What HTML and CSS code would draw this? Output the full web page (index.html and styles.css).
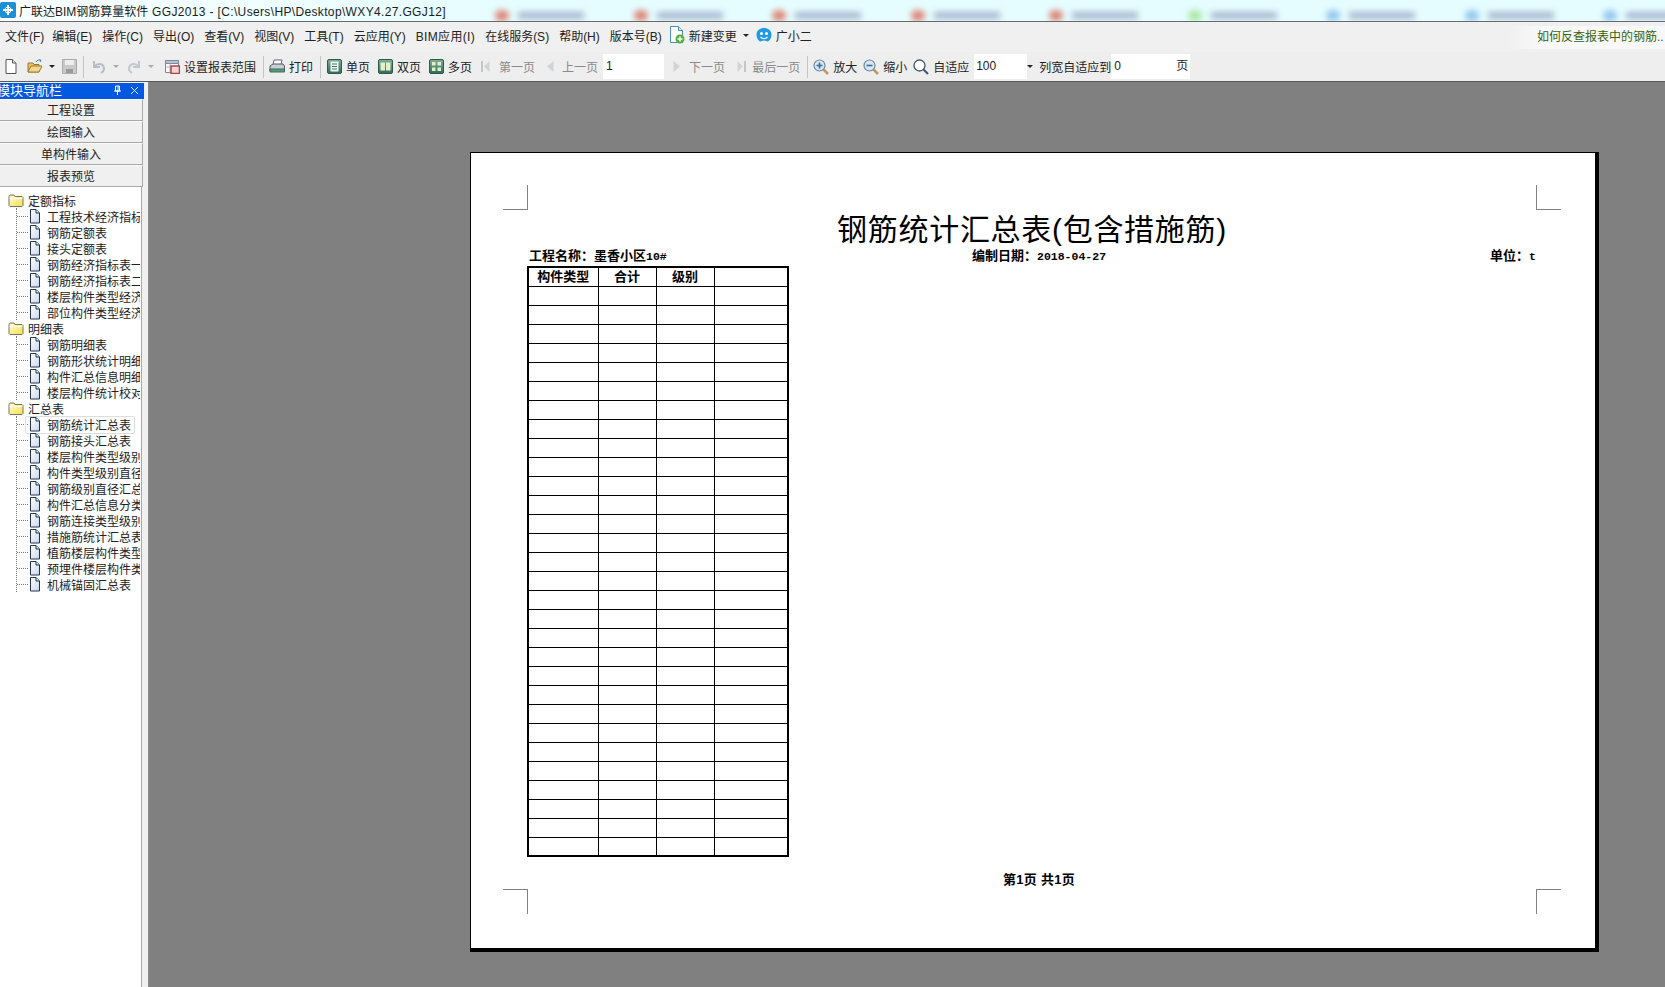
FILE: index.html
```html
<!DOCTYPE html>
<html lang="zh-CN">
<head>
  <meta charset="UTF-8">
  <title>广联达BIM钢筋算量软件 GGJ2013</title>
  <link rel="stylesheet" href="styles.css">
</head>
<body>
<svg class="defs" width="0" height="0">
  <defs>
    <linearGradient id="folderFill" x1="0" y1="0" x2="1" y2="1"><stop offset="0" stop-color="#fffde0"/><stop offset="1" stop-color="#f2e04a"/></linearGradient>
    <linearGradient id="docFill" x1="0" y1="0" x2="1" y2="1"><stop offset="0" stop-color="#fff"/><stop offset="1" stop-color="#c9d8ea"/></linearGradient>
    <linearGradient id="pageFill" x1="0" y1="0" x2="0" y2="1"><stop offset="0" stop-color="#7fb09a"/><stop offset="1" stop-color="#2f6d58"/></linearGradient>
    <symbol id="i-folder" viewBox="0 0 16 14"><path d="M1 12.500V3.500L2 2h4l1 1.500h7l1 1V12.500L14 13.500H2z" fill="url(#folderFill)" stroke="#77725a"/><path d="M1.500 5.500h13" stroke="#fff"/></symbol>
    <symbol id="i-doc" viewBox="0 0 13 15"><path d="M2.500 .5h5.500l3.500 3.500v10h-9z" fill="url(#docFill)" stroke="#1f3550"/><path d="M8 .5v3.500h3.500" fill="#dfe8f3" stroke="#1f3550"/></symbol>
    <symbol id="i-new" viewBox="0 0 12 15"><path d="M1 .5h6.500l3.500 3.500v10.500h-10z" fill="#fff" stroke="#555"/><path d="M7.500 .5v3.500h3.500" fill="#e8e8e8" stroke="#555"/></symbol>
    <symbol id="i-open" viewBox="0 0 16 15"><path d="M1 13V4h5l1 1.500h5V13z" fill="#e9c064" stroke="#9a7a35"/><path d="M1 13l3-6h11l-3 6z" fill="#f4d88a" stroke="#9a7a35"/><path d="M9 3c1-2 3-2.500 5-1.500M14 1.500l-1.500-1M14 1.500l-1 1.500" fill="none" stroke="#4d7fb5"/></symbol>
    <symbol id="i-save" viewBox="0 0 15 15"><path d="M.5 .5h14v14H.5z" fill="#c9c9c9" stroke="#aaa"/><path d="M3 1h9v5H3z" fill="#eee"/><path d="M4 10h7v4H4z" fill="#999"/></symbol>
    <symbol id="i-undo" viewBox="0 0 13 14"><path d="M2 1v6h6M2.500 6.500C5 3 10 3 11.500 6.500c1 2.500 0 5-2.500 6.500" fill="none" stroke="#b5bcc5" stroke-width="2"/></symbol>
    <symbol id="i-redo" viewBox="0 0 13 14"><path d="M11 1v6H5M10.500 6.500C8 3 3 3 1.500 6.500c-1 2.500 0 5 2.500 6.500" fill="none" stroke="#c2c8ce" stroke-width="2"/></symbol>
    <symbol id="i-range" viewBox="0 0 15 15"><path d="M.5 1.500h13v12H.5z" fill="#fff" stroke="#7b8794"/><path d="M.5 1.500h13v3H.5z" fill="#b7c3d0" stroke="#7b8794"/><path d="M5 4.500v9M.5 8h13" stroke="#a9b4bf"/><path d="M6 7h8.500v7.500H6z" fill="#f0d5d5" stroke="#b5404a" stroke-width="1.500"/></symbol>
    <symbol id="i-print" viewBox="0 0 16 15"><path d="M5 1h8l-1 5H4z" fill="#fff" stroke="#667"/><path d="M1 7l3-2h10l1.500 2v5H1z" fill="#c7ced6" stroke="#556"/><path d="M1 10h14.500v3H1z" fill="#5c9a7a" stroke="#3e6a55"/></symbol>
    <symbol id="i-single" viewBox="0 0 15 15"><rect x=".5" y=".5" width="14" height="14" rx="1.500" fill="url(#pageFill)" stroke="#2d5a4a"/><path d="M3.500 2.500h8v10h-8z" fill="#eef4f2"/><path d="M5 5h5M5 7.500h5M5 10h5" stroke="#4a7a68"/></symbol>
    <symbol id="i-double" viewBox="0 0 15 15"><rect x=".5" y=".5" width="14" height="14" rx="1.500" fill="url(#pageFill)" stroke="#2d5a4a"/><path d="M2.500 3.500h4.500v8H2.500zM8 3.500h4.500v8H8z" fill="#e6f0c8"/></symbol>
    <symbol id="i-multi" viewBox="0 0 15 15"><rect x=".5" y=".5" width="14" height="14" rx="1.500" fill="url(#pageFill)" stroke="#2d5a4a"/><path d="M3 3h3.500v3.500H3zM8.500 3H12v3.500H8.500zM3 8.500h3.500V12H3zM8.500 8.500H12V12H8.500z" fill="#e6f0c8"/></symbol>
    <symbol id="i-first" viewBox="0 0 9 13"><path d="M1 1v11" stroke="#c3c7cc" stroke-width="2"/><path d="M8.500 1v11L3 6.500z" fill="#d0d4d8"/></symbol>
    <symbol id="i-prev" viewBox="0 0 8 13"><path d="M7.500 1v11L1 6.500z" fill="#d0d4d8"/></symbol>
    <symbol id="i-next" viewBox="0 0 8 13"><path d="M.5 1v11L7 6.500z" fill="#d0d4d8"/></symbol>
    <symbol id="i-last" viewBox="0 0 9 13"><path d="M8 1v11" stroke="#c3c7cc" stroke-width="2"/><path d="M.5 1v11L6 6.500z" fill="#d0d4d8"/></symbol>
    <symbol id="i-zoomin" viewBox="0 0 16 16"><circle cx="6.500" cy="6.500" r="5.500" fill="#d9e6f2" stroke="#6b87a3" stroke-width="1.200"/><path d="M3.500 6.500h6M6.500 3.500v6" stroke="#33709e" stroke-width="1.600"/><path d="M10.500 10.500l4.500 4.500" stroke="#c09a5a" stroke-width="2.500"/></symbol>
    <symbol id="i-zoomout" viewBox="0 0 16 16"><circle cx="6.500" cy="6.500" r="5.500" fill="#d9e6f2" stroke="#6b87a3" stroke-width="1.200"/><path d="M3.500 6.500h6" stroke="#33709e" stroke-width="1.600"/><path d="M10.500 10.500l4.500 4.500" stroke="#c09a5a" stroke-width="2.500"/></symbol>
    <symbol id="i-fit" viewBox="0 0 16 16"><circle cx="6.500" cy="6.500" r="5.500" fill="#fff" stroke="#3f566b" stroke-width="1.300"/><path d="M10.500 10.500l4.500 4.500" stroke="#3f566b" stroke-width="2"/></symbol>
  </defs>
</svg>

<div class="titlebar">
  <svg class="app-icon" width="16" height="16" viewBox="0 0 16 16"><rect width="16" height="16" rx="2" fill="#1c8fd6"/><path d="M8 3v10M3 8h10" stroke="#fff" stroke-width="2"/><circle cx="8" cy="8" r="3" fill="none" stroke="#fff"/></svg>
  <span class="app-title">广联达BIM钢筋算量软件<span class="app-path"> GGJ2013 - [C:\Users\HP\Desktop\WXY4.27.GGJ12]</span></span>
  <div class="ad-strip">
    <div class="ad"><i class="ad-dot red"></i><i class="ad-bar"></i></div>
    <div class="ad"><i class="ad-dot red"></i><i class="ad-bar"></i></div>
    <div class="ad"><i class="ad-dot red"></i><i class="ad-bar"></i></div>
    <div class="ad"><i class="ad-dot red"></i><i class="ad-bar"></i></div>
    <div class="ad"><i class="ad-dot red"></i><i class="ad-bar"></i></div>
    <div class="ad"><i class="ad-dot green"></i><i class="ad-bar"></i></div>
    <div class="ad"><i class="ad-dot blue"></i><i class="ad-bar"></i></div>
    <div class="ad"><i class="ad-dot blue"></i><i class="ad-bar"></i></div>
    <div class="ad"><i class="ad-dot blue"></i><i class="ad-bar"></i></div>
  </div>
</div>

<div class="menubar">
  <span class="menu-first">文件(F)</span>
  <span>编辑(E)</span>
  <span>操作(C)</span>
  <span>导出(O)</span>
  <span>查看(V)</span>
  <span>视图(V)</span>
  <span>工具(T)</span>
  <span>云应用(Y)</span>
  <span class="menu-bim">BIM应用(I)</span>
  <span>在线服务(S)</span>
  <span>帮助(H)</span>
  <span>版本号(B)</span>
  <span class="menu-icon menu-change">
    <svg width="16" height="18" viewBox="0 0 16 18"><path d="M1.500 .5h8l4 4v12h-12z" fill="#fff" stroke="#4a8fc0"/><path d="M9.500 .5v4h4" fill="#dcecf8" stroke="#4a8fc0"/><circle cx="11" cy="13" r="4.500" fill="#52b043"/><path d="M8.500 13h5M11 10.500v5" stroke="#fff" stroke-width="1.500"/></svg>
    新建变更
  </span>
  <i class="drop dark menu-drop"></i>
  <span class="menu-icon">
    <svg width="16" height="16" viewBox="0 0 16 16"><path d="M8 1c4 0 7.500 2.500 7.500 6.500 0 4-2.500 7-4 7-1 0-1.500-1-3.500-1s-2.500 1-3.500 1c-1.500 0-4-3-4-7C.5 3.500 4 1 8 1z" fill="#1f9be2"/><circle cx="5.500" cy="6.500" r="1.500" fill="#fff"/><circle cx="10.500" cy="6.500" r="1.500" fill="#fff"/><path d="M4.500 10c2 2 5 2 7 0" fill="none" stroke="#fff" stroke-width="1.300"/></svg>
    广小二
  </span>
  <div class="tip">如何反查报表中的钢筋..</div>
</div>

<div class="toolbar">
  <svg class="ml5" width="12" height="15"><use href="#i-new"/></svg>
  <svg class="ml10" width="16" height="15"><use href="#i-open"/></svg>
  <i class="drop dark ml6"></i>
  <svg class="ml7" width="15" height="15"><use href="#i-save"/></svg>
  <i class="sep ml6"></i>
  <svg class="ml8" width="13" height="14"><use href="#i-undo"/></svg>
  <i class="drop ml8"></i>
  <svg class="ml9" width="13" height="14"><use href="#i-redo"/></svg>
  <i class="drop ml7"></i>
  <svg class="ml11" width="15" height="15"><use href="#i-range"/></svg>
  <span class="tool-text">设置报表范围</span>
  <i class="sep"></i>
  <svg class="ml5" width="16" height="15"><use href="#i-print"/></svg>
  <span class="tool-text">打印</span>
  <i class="sep"></i>
  <svg class="ml6" width="15" height="15"><use href="#i-single"/></svg>
  <span class="tool-text">单页</span>
  <svg class="ml8" width="15" height="15"><use href="#i-double"/></svg>
  <span class="tool-text">双页</span>
  <svg class="ml8" width="15" height="15"><use href="#i-multi"/></svg>
  <span class="tool-text">多页</span>
  <svg class="ml9" width="9" height="13"><use href="#i-first"/></svg>
  <span class="tool-text off ml9">第一页</span>
  <svg class="ml11" width="8" height="13"><use href="#i-prev"/></svg>
  <span class="tool-text off ml8">上一页</span>
  <div class="field page-no">1</div>
  <svg class="ml9" width="8" height="13"><use href="#i-next"/></svg>
  <span class="tool-text off ml8">下一页</span>
  <svg class="ml12" width="9" height="13"><use href="#i-last"/></svg>
  <span class="tool-text off ml6">最后一页</span>
  <i class="sep"></i>
  <svg class="ml5" width="16" height="16"><use href="#i-zoomin"/></svg>
  <span class="tool-text">放大</span>
  <svg class="ml6" width="16" height="16"><use href="#i-zoomout"/></svg>
  <span class="tool-text">缩小</span>
  <svg class="ml6" width="16" height="16"><use href="#i-fit"/></svg>
  <span class="tool-text">自适应</span>
  <div class="field zoom-no">100</div>
  <i class="drop dark"></i>
  <span class="tool-text ml6">列宽自适应到</span>
  <div class="field col-no">0</div>
  <div class="field page-unit">页</div>
</div>

<div class="main">
  <div class="nav">
    <div class="nav-title">
      <span>模块导航栏</span>
      <svg class="nav-pin" width="9" height="10" viewBox="0 0 9 10"><path d="M2.500 1h4v5h-4zM1 6h7M4.500 6v4M5 1v5" fill="none" stroke="#fff"/></svg>
      <svg class="nav-close" width="9" height="9" viewBox="0 0 9 9"><path d="M1 1l7 7M8 1L1 8" stroke="#dfe9ff"/></svg>
    </div>
    <div class="nav-btn">工程设置</div>
    <div class="nav-btn">绘图输入</div>
    <div class="nav-btn">单构件输入</div>
    <div class="nav-btn">报表预览</div>
    <div class="tree">
      <div class="tree-root"><svg width="16" height="14"><use href="#i-folder"/></svg>定额指标</div>
      <ul class="tree-list">
        <li><svg width="13" height="15"><use href="#i-doc"/></svg>工程技术经济指标</li>
        <li><svg width="13" height="15"><use href="#i-doc"/></svg>钢筋定额表</li>
        <li><svg width="13" height="15"><use href="#i-doc"/></svg>接头定额表</li>
        <li><svg width="13" height="15"><use href="#i-doc"/></svg>钢筋经济指标表一</li>
        <li><svg width="13" height="15"><use href="#i-doc"/></svg>钢筋经济指标表二</li>
        <li><svg width="13" height="15"><use href="#i-doc"/></svg>楼层构件类型经济指标表</li>
        <li><svg width="13" height="15"><use href="#i-doc"/></svg>部位构件类型经济指标表</li>
      </ul>
      <div class="tree-root"><svg width="16" height="14"><use href="#i-folder"/></svg>明细表</div>
      <ul class="tree-list">
        <li><svg width="13" height="15"><use href="#i-doc"/></svg>钢筋明细表</li>
        <li><svg width="13" height="15"><use href="#i-doc"/></svg>钢筋形状统计明细表</li>
        <li><svg width="13" height="15"><use href="#i-doc"/></svg>构件汇总信息明细表</li>
        <li><svg width="13" height="15"><use href="#i-doc"/></svg>楼层构件统计校对表</li>
      </ul>
      <div class="tree-root"><svg width="16" height="14"><use href="#i-folder"/></svg>汇总表</div>
      <ul class="tree-list">
        <li class="selected"><svg width="13" height="15"><use href="#i-doc"/></svg>钢筋统计汇总表</li>
        <li><svg width="13" height="15"><use href="#i-doc"/></svg>钢筋接头汇总表</li>
        <li><svg width="13" height="15"><use href="#i-doc"/></svg>楼层构件类型级别直径汇总表</li>
        <li><svg width="13" height="15"><use href="#i-doc"/></svg>构件类型级别直径汇总表</li>
        <li><svg width="13" height="15"><use href="#i-doc"/></svg>钢筋级别直径汇总表</li>
        <li><svg width="13" height="15"><use href="#i-doc"/></svg>构件汇总信息分类统计表</li>
        <li><svg width="13" height="15"><use href="#i-doc"/></svg>钢筋连接类型级别直径汇总表</li>
        <li><svg width="13" height="15"><use href="#i-doc"/></svg>措施筋统计汇总表</li>
        <li><svg width="13" height="15"><use href="#i-doc"/></svg>植筋楼层构件类型级别直径汇总表</li>
        <li><svg width="13" height="15"><use href="#i-doc"/></svg>预埋件楼层构件类型统计表</li>
        <li><svg width="13" height="15"><use href="#i-doc"/></svg>机械锚固汇总表</li>
      </ul>
    </div>
  </div>

  <div class="preview">
    <div class="sheet">
      <i class="crop crop-tl"></i>
      <i class="crop crop-tr"></i>
      <i class="crop crop-bl"></i>
      <i class="crop crop-br"></i>

      <h1 class="sheet-title">钢筋统计汇总表(包含措施筋)</h1>
      <div class="sheet-info">
        <span>工程名称：墨香小区<span class="mono">10#</span></span>
        <span>编制日期：<span class="mono">2018-04-27</span></span>
        <span class="sheet-unit">单位：<span class="mono">t</span></span>
      </div>

      <table class="report">
        <colgroup><col class="c1"><col class="c2"><col class="c3"><col class="c4"></colgroup>
        <thead><tr><th>构件类型</th><th>合计</th><th>级别</th><th></th></tr></thead>
        <tbody>
          <tr><td></td><td></td><td></td><td></td></tr>
          <tr><td></td><td></td><td></td><td></td></tr>
          <tr><td></td><td></td><td></td><td></td></tr>
          <tr><td></td><td></td><td></td><td></td></tr>
          <tr><td></td><td></td><td></td><td></td></tr>
          <tr><td></td><td></td><td></td><td></td></tr>
          <tr><td></td><td></td><td></td><td></td></tr>
          <tr><td></td><td></td><td></td><td></td></tr>
          <tr><td></td><td></td><td></td><td></td></tr>
          <tr><td></td><td></td><td></td><td></td></tr>
          <tr><td></td><td></td><td></td><td></td></tr>
          <tr><td></td><td></td><td></td><td></td></tr>
          <tr><td></td><td></td><td></td><td></td></tr>
          <tr><td></td><td></td><td></td><td></td></tr>
          <tr><td></td><td></td><td></td><td></td></tr>
          <tr><td></td><td></td><td></td><td></td></tr>
          <tr><td></td><td></td><td></td><td></td></tr>
          <tr><td></td><td></td><td></td><td></td></tr>
          <tr><td></td><td></td><td></td><td></td></tr>
          <tr><td></td><td></td><td></td><td></td></tr>
          <tr><td></td><td></td><td></td><td></td></tr>
          <tr><td></td><td></td><td></td><td></td></tr>
          <tr><td></td><td></td><td></td><td></td></tr>
          <tr><td></td><td></td><td></td><td></td></tr>
          <tr><td></td><td></td><td></td><td></td></tr>
          <tr><td></td><td></td><td></td><td></td></tr>
          <tr><td></td><td></td><td></td><td></td></tr>
          <tr><td></td><td></td><td></td><td></td></tr>
          <tr><td></td><td></td><td></td><td></td></tr>
          <tr><td></td><td></td><td></td><td></td></tr>
        </tbody>
      </table>

      <div class="sheet-footer">第1页 共1页</div>
    </div>
  </div>
</div>
</body>
</html>
```

FILE: styles.css
```css
* {
  box-sizing: border-box;
}

html, body {
  height: 987px;
}

body {
  margin: 0;
  overflow: hidden;
  font-family: "Liberation Sans", "Noto Sans CJK SC", sans-serif;
  font-size: 12px;
  color: #222;
  background-color: #f0f0f0;
  display: flex;
  flex-direction: column;
}

.defs {
  position: absolute;
}

i {
  display: block;
  font-style: normal;
}

svg {
  flex: none;
  display: block;
}

/* title bar */
.titlebar {
  flex: none;
  height: 22px;
  display: flex;
  align-items: center;
  padding-bottom: 1px;
  background: linear-gradient(90deg, #f8ffff, #e6fdff 30%, #e6fdff);
  border-bottom: 1px solid #6a6a6a;
  overflow: hidden;
}

.app-icon {
  margin-right: 3px;
}

.app-title {
  width: 476px;
  flex: none;
  font-size: 12px;
  white-space: nowrap;
  color: #1c1c1c;
}

.app-path {
  letter-spacing: .35px;
}

.ad-strip {
  display: flex;
  margin-top: 10px;
  filter: blur(3px);
}

.ad {
  width: 138.5px;
  flex: none;
  display: flex;
  align-items: center;
  gap: 9px;
}

.ad-dot {
  width: 14px;
  height: 11px;
  border-radius: 50%;
}

.ad-dot.red { background-color: #dd8070; }
.ad-dot.green { background-color: #a6e8a0; }
.ad-dot.blue { background-color: #8fc4ec; }

.ad-bar {
  width: 66px;
  height: 7px;
  background-color: #a5b6cc;
}

/* menu */
.menubar {
  flex: none;
  height: 30px;
  display: flex;
  align-items: center;
  gap: 10px;
  padding: 0 0 4px 5px;
  background-color: #f0f0f0;
  white-space: nowrap;
}

.menu-first {
  margin-right: -2px;
}

.menu-bim {
  letter-spacing: .35px;
}

.menu-icon {
  display: flex;
  align-items: center;
  gap: 4px;
}

.menu-change {
  margin-left: -3px;
}

.menu-drop {
  margin: 0 -3px 0 -4px;
}

.drop {
  width: 0;
  height: 0;
  flex: none;
  border-left: 3px solid transparent;
  border-right: 3px solid transparent;
  border-top: 3px solid #aaa;
}

.drop.dark {
  border-top-color: #222;
}

.tip {
  margin: 4px 0 0 auto;
  width: 156px;
  height: 23px;
  line-height: 23px;
  padding-left: 28px;
  overflow: hidden;
  color: #35630f;
  background: linear-gradient(90deg, #f0f0f0, #f8f8f8 20%);
}

/* toolbar */
.toolbar {
  flex: none;
  height: 30px;
  display: flex;
  align-items: center;
  background-color: #eeeeee;
  border-bottom: 1px solid #5a5a5a;
  white-space: nowrap;
}

.tool-text {
  flex: none;
  margin-left: 4px;
  color: #222;
}

.tool-text.off {
  color: #8a8a8a;
}

.sep {
  width: 1px;
  height: 22px;
  flex: none;
  margin-left: 7px;
  background-color: #c4c4c4;
}

.field {
  height: 25px;
  flex: none;
  line-height: 25px;
  background-color: #fff;
}

.page-no {
  width: 61px;
  margin-left: 5px;
  padding-left: 3px;
}

.zoom-no {
  width: 53px;
  margin-left: 5px;
  padding-left: 2px;
}

.col-no {
  width: 64px;
  padding-left: 3px;
}

.page-unit {
  width: 15px;
  padding-left: 1px;
}

.ml5 { margin-left: 5px; }
.ml6 { margin-left: 6px; }
.ml7 { margin-left: 7px; }
.ml8 { margin-left: 8px; }
.ml9 { margin-left: 9px; }
.ml10 { margin-left: 10px; }
.ml11 { margin-left: 11px; }
.ml12 { margin-left: 12px; }

/* main area */
.main {
  flex: 1;
  min-height: 0;
  display: flex;
}

.nav {
  width: 149px;
  flex: none;
  display: flex;
  flex-direction: column;
  padding-top: 1px;
  background-color: #f0f0f0;
  border-right: 1px solid #8c8c8c;
}

.nav-title {
  width: 144px;
  height: 16px;
  flex: none;
  display: flex;
  align-items: center;
  padding-bottom: 2px;
  background-color: #0358e0;
  color: #fff;
  font-size: 13px;
  line-height: 15px;
  overflow: hidden;
}

.nav-title span {
  margin-left: -3px;
  white-space: nowrap;
}

.nav-pin {
  margin-left: auto;
}

.nav-close {
  margin: 0 5px 0 8px;
}

.nav-btn {
  width: 143px;
  height: 22px;
  flex: none;
  line-height: 22px;
  text-align: center;
  background-color: #f0f0f0;
  border: 1px solid #a8a8a8;
  border-left: none;
  border-top-color: #fafafa;
}

.tree {
  width: 142px;
  flex: 1;
  padding-top: 5px;
  background-color: #fff;
  border-right: 1px solid #a8a8a8;
  overflow: hidden;
  white-space: nowrap;
}

.tree-root {
  height: 16px;
  display: flex;
  align-items: center;
  gap: 4px;
  padding-left: 8px;
}

.tree-list {
  list-style: none;
  margin: 0 0 0 16px;
  padding: 0;
  border-left: 1px dotted #777;
}

.tree-list li {
  height: 16px;
  display: flex;
  align-items: center;
  gap: 6px;
  padding-left: 11px;
  position: relative;
  width: 123px;
  overflow: hidden;
}

.tree-list li::before {
  content: "";
  position: absolute;
  left: 0;
  top: 8px;
  width: 11px;
  border-top: 1px dotted #777;
}

.tree-list li.selected {
  overflow: visible;
}

.tree-list li.selected::after {
  content: "";
  position: absolute;
  left: 8px;
  top: 0;
  width: 108px;
  height: 16px;
  border: 1px solid #dddddd;
  border-radius: 2px;
}

/* report preview */
.preview {
  flex: 1;
  min-width: 0;
  padding: 70px 0 0 321px;
  background-color: #808080;
}

.sheet {
  position: relative;
  width: 1129px;
  height: 800px;
  background-color: #fff;
  border: solid #000;
  border-width: 1px 4px 4px 1px;
  color: #000;
}

.crop {
  position: absolute;
  width: 25px;
  height: 25px;
  border: 0 solid #808080;
}

.crop-tl { left: 32px; top: 32px; border-width: 0 1px 1px 0; }
.crop-tr { left: 1065px; top: 32px; border-width: 0 0 1px 1px; }
.crop-bl { left: 32px; top: 736px; border-width: 1px 1px 0 0; }
.crop-br { left: 1065px; top: 736px; border-width: 1px 0 0 1px; }

.sheet-title {
  margin: 0;
  padding: 58px 2px 0 0;
  height: 95px;
  font-size: 30px;
  line-height: 38px;
  font-weight: 400;
  letter-spacing: .7px;
  text-align: center;
}

.sheet-info {
  display: grid;
  grid-template-columns: 443px auto 1fr;
  height: 18px;
  padding: 0 59px 0 58px;
  font-size: 13px;
  line-height: 16px;
  font-weight: 700;
}

.sheet-unit {
  justify-self: end;
}

.mono {
  font-family: "Liberation Mono", monospace;
  font-size: 11.5px;
}

.report {
  margin-left: 56px;
  width: 260px;
  border-collapse: collapse;
  table-layout: fixed;
  border: 2px solid #000;
}

.report .c1 { width: 70px; }
.report .c2 { width: 58px; }
.report .c3 { width: 58px; }
.report .c4 { width: 74px; }

.report th,
.report td {
  height: 19px;
  padding: 0;
  border: 1px solid #000;
  font-size: 13px;
  line-height: 16px;
  text-align: center;
}

.sheet-footer {
  margin-top: 15px;
  padding-left: 12px;
  font-size: 13px;
  line-height: 16px;
  font-weight: 700;
  letter-spacing: .3px;
  text-align: center;
}
```
